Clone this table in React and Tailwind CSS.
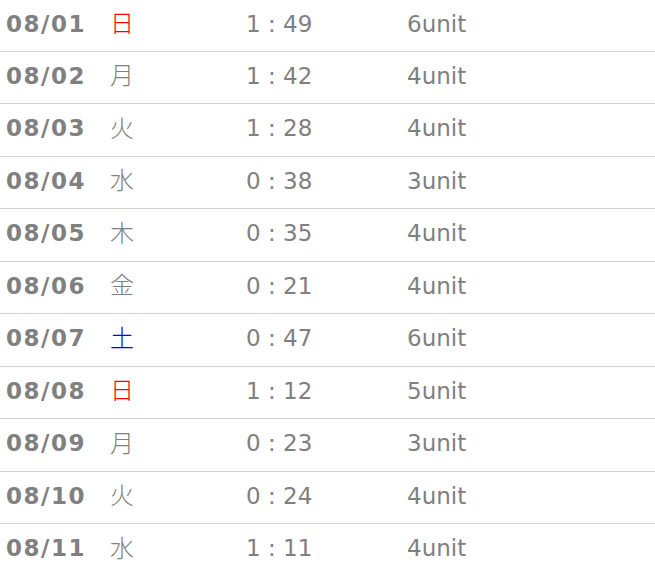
import React from "react";

const rows = [
  ["08/01", "日", "1 : 49", "6unit", "red"],
  ["08/02", "月", "1 : 42", "4unit", ""],
  ["08/03", "火", "1 : 28", "4unit", ""],
  ["08/04", "水", "0 : 38", "3unit", ""],
  ["08/05", "木", "0 : 35", "4unit", ""],
  ["08/06", "金", "0 : 21", "4unit", ""],
  ["08/07", "土", "0 : 47", "6unit", "blue"],
  ["08/08", "日", "1 : 12", "5unit", "red"],
  ["08/09", "月", "0 : 23", "3unit", ""],
  ["08/10", "火", "0 : 24", "4unit", ""],
  ["08/11", "水", "1 : 11", "4unit", ""],
];

export default function App() {
  return (
    <div
      className="w-[655px] h-[575px] overflow-hidden bg-white text-[#808080] text-[23px]"
      style={{ fontFamily: '"DejaVu Sans", "Noto Sans CJK JP", sans-serif' }}
    >
      {rows.map(([d, w, t, u, c], i) => (
        <div
          key={i}
          className={
            "flex items-center border-b border-[#d3d3d3] pl-[6px] pb-[3px] " +
            (i === 0 ? "h-[51.5px]" : "h-[52.5px]")
          }
        >
          <div className="w-[104px] font-bold text-[23px] tracking-[1.5px]">{d}</div>
          <div
            className={
              "w-[136px] text-[24px] leading-none mb-[3px] " +
              (c === "red" ? "text-[#ff0000]" : c === "blue" ? "text-[#0000ff]" : "")
            }
            style={{ fontFamily: '"Noto Sans CJK JP", sans-serif', fontWeight: 300 }}
          >
            {w}
          </div>
          <div className="w-[161px] whitespace-pre">{t}</div>
          <div>{u}</div>
        </div>
      ))}
    </div>
  );
}
